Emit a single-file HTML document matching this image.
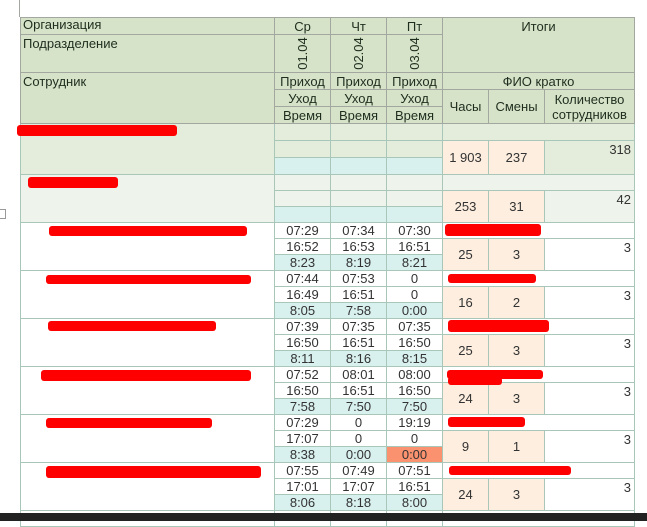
<!DOCTYPE html>
<html><head><meta charset="utf-8"><style>
body{margin:0;width:647px;height:521px;overflow:hidden;background:#fff;font-family:"Liberation Sans",Arial,sans-serif;font-size:13px;position:relative}
table{position:absolute;left:20px;top:17px;border-collapse:collapse;table-layout:fixed;width:614px}
tr{height:16px}
td{padding:0 2px;line-height:13px;white-space:nowrap;overflow:hidden;color:#333}
.h tr{height:17px}
.h td{background:#d7e3c9;border:1px solid #a2a8a0;color:#1e2e1e;text-align:center}
.h td.l{text-align:left;vertical-align:top}
.rot{display:inline-block;transform:rotate(-90deg);white-space:nowrap}
.b td{border:1px solid #a9c7b9;text-align:center}
.g1 tr{height:17px}
.g1 td{background:#e4eddb}
.g2 td{background:#eef4ec}
td.bl{background:#d8f0ee!important}
td.pe{background:#fdeedf!important}
td.w{background:#fff}
td.cnt{text-align:right;vertical-align:top;padding-right:3px;padding-top:2px}
td.or{background:#fa926f!important}
.r{position:absolute;background:#f00;border-radius:3px}
</style></head><body>
<div style="position:absolute;left:19px;top:0;width:1px;height:17px;background:#a2a8a0"></div>
<div style="position:absolute;left:0;top:209px;width:5px;height:8px;border:1px solid #999;border-left:none"></div>
<table>
<colgroup><col style="width:254px"><col style="width:56px"><col style="width:56px"><col style="width:56px"><col style="width:46px"><col style="width:56px"><col style="width:90px"></colgroup>
<tbody class="h">
<tr><td class="l">Организация</td><td>Ср</td><td>Чт</td><td>Пт</td><td colspan="3" rowspan="2" style="vertical-align:top;padding-top:2px">Итоги</td></tr>
<tr style="height:38px"><td class="l" style="padding-top:2px">Подразделение</td><td><span class="rot">01.04</span></td><td><span class="rot">02.04</span></td><td><span class="rot">03.04</span></td></tr>
<tr><td class="l" rowspan="3" style="padding-top:2px">Сотрудник</td><td>Приход</td><td>Приход</td><td>Приход</td><td colspan="3">ФИО кратко</td></tr>
<tr><td>Уход</td><td>Уход</td><td>Уход</td><td rowspan="2">Часы</td><td rowspan="2">Смены</td><td rowspan="2" style="line-height:15px;white-space:normal">Количество сотрудников</td></tr>
<tr><td>Время</td><td>Время</td><td>Время</td></tr>
</tbody>
<tbody class="b g1">
<tr><td rowspan="3"></td><td></td><td></td><td></td><td colspan="3"></td></tr>
<tr><td></td><td></td><td></td><td class="pe" rowspan="2">1 903</td><td class="pe" rowspan="2">237</td><td class="cnt" rowspan="2">318</td></tr>
<tr><td class="bl"></td><td class="bl"></td><td class="bl"></td></tr>
</tbody>
<tbody class="b g2">
<tr><td rowspan="3"></td><td></td><td></td><td></td><td colspan="3"></td></tr>
<tr><td></td><td></td><td></td><td class="pe" rowspan="2">253</td><td class="pe" rowspan="2">31</td><td class="cnt" rowspan="2">42</td></tr>
<tr><td class="bl"></td><td class="bl"></td><td class="bl"></td></tr>
</tbody>
<tbody class="b">
<tr><td rowspan="3" class="w"></td><td>07:29</td><td>07:34</td><td>07:30</td><td colspan="3"></td></tr>
<tr><td>16:52</td><td>16:53</td><td>16:51</td><td class="pe" rowspan="2">25</td><td class="pe" rowspan="2">3</td><td class="cnt" rowspan="2">3</td></tr>
<tr><td class="bl">8:23</td><td class="bl">8:19</td><td class="bl">8:21</td></tr>
<tr><td rowspan="3"></td><td>07:44</td><td>07:53</td><td>0</td><td colspan="3"></td></tr>
<tr><td>16:49</td><td>16:51</td><td>0</td><td class="pe" rowspan="2">16</td><td class="pe" rowspan="2">2</td><td class="cnt" rowspan="2">3</td></tr>
<tr><td class="bl">8:05</td><td class="bl">7:58</td><td class="bl">0:00</td></tr>
<tr><td rowspan="3"></td><td>07:39</td><td>07:35</td><td>07:35</td><td colspan="3"></td></tr>
<tr><td>16:50</td><td>16:51</td><td>16:50</td><td class="pe" rowspan="2">25</td><td class="pe" rowspan="2">3</td><td class="cnt" rowspan="2">3</td></tr>
<tr><td class="bl">8:11</td><td class="bl">8:16</td><td class="bl">8:15</td></tr>
<tr><td rowspan="3"></td><td>07:52</td><td>08:01</td><td>08:00</td><td colspan="3"></td></tr>
<tr><td>16:50</td><td>16:51</td><td>16:50</td><td class="pe" rowspan="2">24</td><td class="pe" rowspan="2">3</td><td class="cnt" rowspan="2">3</td></tr>
<tr><td class="bl">7:58</td><td class="bl">7:50</td><td class="bl">7:50</td></tr>
<tr><td rowspan="3"></td><td>07:29</td><td>0</td><td>19:19</td><td colspan="3"></td></tr>
<tr><td>17:07</td><td>0</td><td>0</td><td class="pe" rowspan="2">9</td><td class="pe" rowspan="2">1</td><td class="cnt" rowspan="2">3</td></tr>
<tr><td class="bl">8:38</td><td class="bl">0:00</td><td class="or">0:00</td></tr>
<tr><td rowspan="3"></td><td>07:55</td><td>07:49</td><td>07:51</td><td colspan="3"></td></tr>
<tr><td>17:01</td><td>17:07</td><td>16:51</td><td class="pe" rowspan="2">24</td><td class="pe" rowspan="2">3</td><td class="cnt" rowspan="2">3</td></tr>
<tr><td class="bl">8:06</td><td class="bl">8:18</td><td class="bl">8:00</td></tr>
<tr><td></td><td></td><td></td><td></td><td colspan="3"></td></tr>
</tbody>
</table>
<div class="r" style="left:17px;top:125px;width:160px;height:11px"></div>
<div class="r" style="left:28px;top:177px;width:90px;height:11px"></div>
<div class="r" style="left:49px;top:226px;width:198px;height:10px"></div>
<div class="r" style="left:445px;top:224px;width:96px;height:12px"></div>
<div class="r" style="left:46px;top:275px;width:205px;height:9px"></div>
<div class="r" style="left:448px;top:274px;width:88px;height:9px"></div>
<div class="r" style="left:48px;top:321px;width:168px;height:10px"></div>
<div class="r" style="left:448px;top:320px;width:101px;height:12px"></div>
<div class="r" style="left:41px;top:370px;width:210px;height:11px"></div>
<div class="r" style="left:447px;top:370px;width:96px;height:9px"></div>
<div class="r" style="left:448px;top:377px;width:54px;height:8px"></div>
<div class="r" style="left:46px;top:418px;width:166px;height:10px"></div>
<div class="r" style="left:448px;top:417px;width:77px;height:10px"></div>
<div class="r" style="left:46px;top:466px;width:215px;height:12px"></div>
<div class="r" style="left:449px;top:466px;width:122px;height:9px"></div>
<div style="position:absolute;left:0;top:513px;width:647px;height:8px;background:#222"></div>
</body></html>
